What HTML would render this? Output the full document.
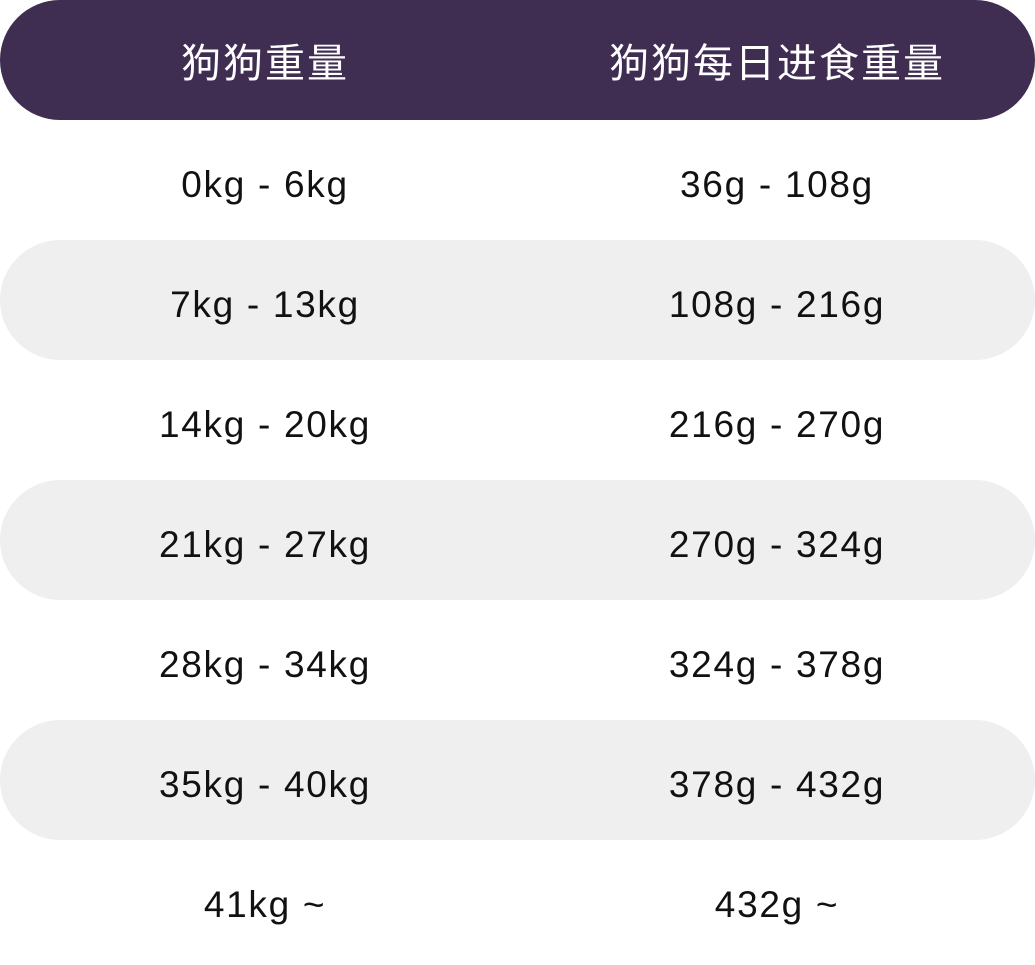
<!DOCTYPE html>
<html><head><meta charset="utf-8"><style>
html,body{margin:0;padding:0;background:#fff;}
body{width:1035px;height:930px;overflow:hidden;position:relative;font-family:"Liberation Sans","Noto Sans CJK SC",sans-serif;}
.row{position:absolute;left:0;width:1035px;height:120px;border-radius:60px;}
.hd{background:#3f2d52;color:#fff;}
.g{background:#efefef;}
.c{position:absolute;top:0;height:120px;line-height:120px;text-align:center;white-space:nowrap;}
.c1{left:65px;width:400px;}
.c2{left:577px;width:400px;}
.hd .c{font-family:"Noto Sans CJK SC",sans-serif;font-size:40px;letter-spacing:2px;}
.n{font-size:37px;color:#111;letter-spacing:1.7px;}
</style></head><body>
<div class="row hd" style="top:0"><div class="c c1">狗狗重量</div><div class="c c2">狗狗每日进食重量</div></div>
<div class="row" style="top:125px"><div class="c c1 n">0kg - 6kg</div><div class="c c2 n">36g - 108g</div></div>
<div class="row g" style="top:240px"><div class="c c1 n" style="top:5px">7kg - 13kg</div><div class="c c2 n" style="top:5px">108g - 216g</div></div>
<div class="row" style="top:365px"><div class="c c1 n">14kg - 20kg</div><div class="c c2 n">216g - 270g</div></div>
<div class="row g" style="top:480px"><div class="c c1 n" style="top:5px">21kg - 27kg</div><div class="c c2 n" style="top:5px">270g - 324g</div></div>
<div class="row" style="top:605px"><div class="c c1 n">28kg - 34kg</div><div class="c c2 n">324g - 378g</div></div>
<div class="row g" style="top:720px"><div class="c c1 n" style="top:5px">35kg - 40kg</div><div class="c c2 n" style="top:5px">378g - 432g</div></div>
<div class="row" style="top:845px"><div class="c c1 n">41kg ~</div><div class="c c2 n">432g ~</div></div>
</body></html>
